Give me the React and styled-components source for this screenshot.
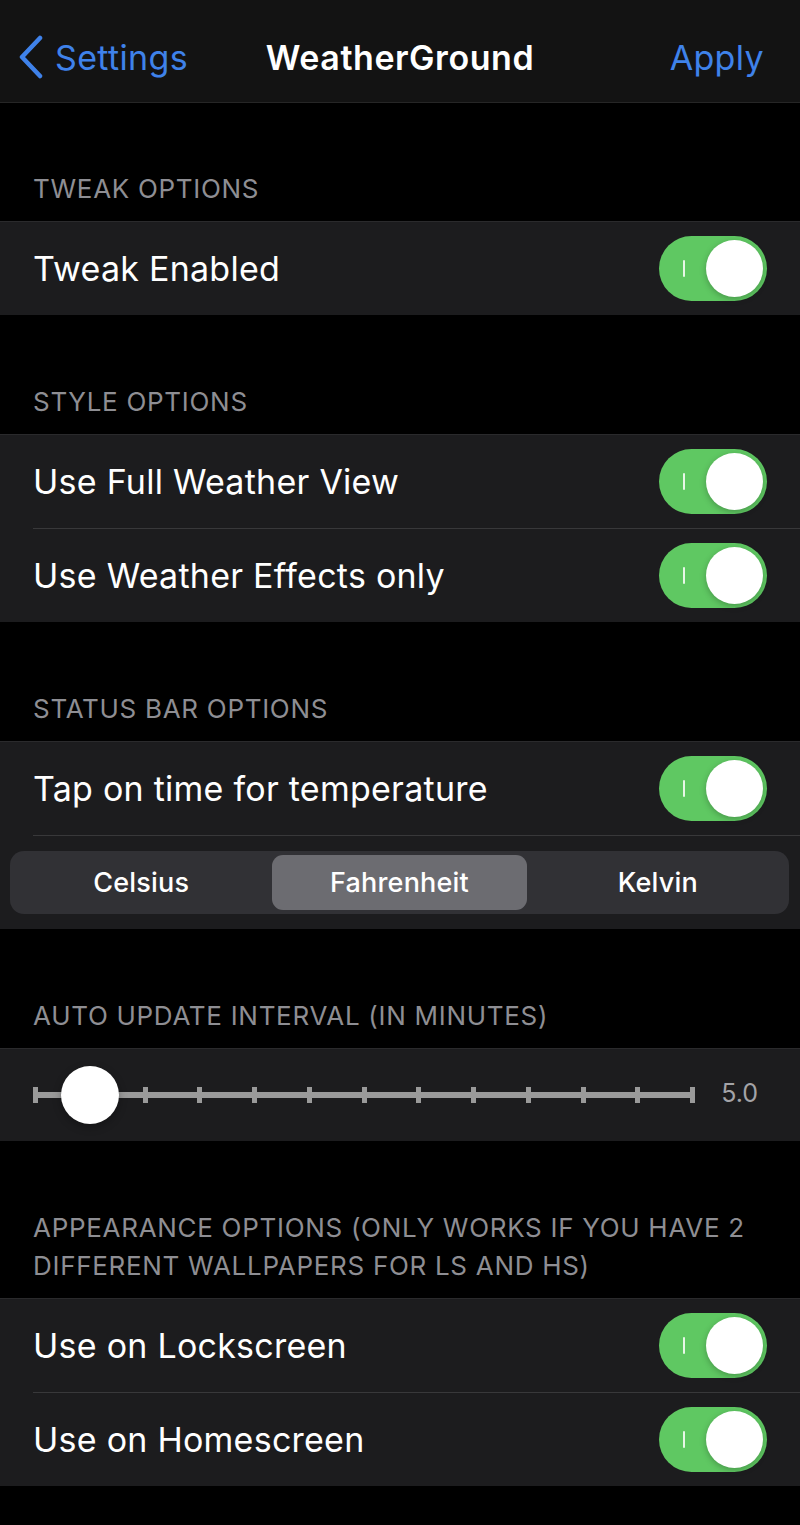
import React from "react";
import styled, { createGlobalStyle } from "styled-components";

const GlobalStyle = createGlobalStyle`
  html, body {
    margin: 0;
    padding: 0;
    background: #000;
  }
  body {
    font-family: Inter, "Noto Sans", "Liberation Sans", sans-serif;
    color: #fff;
    -webkit-font-smoothing: antialiased;
  }
`;

const Page = styled.div`
  width: 800px;
  min-height: 1525px;
  background: #000;
`;

const NavBar = styled.div`
  height: 103px;
  background: #131313;
  border-bottom: 1px solid #262626;
  box-sizing: border-box;
  display: grid;
  grid-template-columns: 1fr auto 1fr;
  align-items: center;
  padding: 12px 36px 0 36px;
`;

const BackButton = styled.div`
  display: flex;
  align-items: center;
  gap: 10px;
  margin-left: -19px;
  color: #3f82ea;
  font-size: 34px;
  letter-spacing: 0.35px;
  justify-self: start;
`;

const Title = styled.div`
  font-size: 34px;
  font-weight: 600;
  letter-spacing: 0.55px;
`;

const NavAction = styled.div`
  justify-self: end;
  color: #3f82ea;
  font-size: 34px;
  letter-spacing: 0.35px;
`;

const Section = styled.section`
  &:first-of-type > div:first-child {
    margin-top: 67px;
  }
`;

const Header = styled.div`
  margin-top: 68px;
  padding: 0 33px 13px;
  color: #8e8e93;
  font-size: 26px;
  line-height: 38px;
  letter-spacing: 0.7px;
  text-transform: uppercase;
`;

const Group = styled.div`
  background: #1c1c1e;
  box-shadow: inset 0 1px 0 #2a2a2c;
`;

const Row = styled.div`
  height: 94px;
  box-sizing: border-box;
  margin-left: 33px;
  padding-right: 33px;
  display: flex;
  align-items: center;
  justify-content: space-between;
  border-top: ${(p) => (p.first ? "none" : "1px solid #38383a")};
`;

const Label = styled.div`
  font-size: 34px;
  letter-spacing: 0.25px;
`;

const SwitchTrack = styled.div`
  position: relative;
  width: 108px;
  height: 65px;
  border-radius: 33px;
  background: ${(p) => (p.on ? "#5fc862" : "#39393d")};
  flex-shrink: 0;
`;

const SwitchMark = styled.span`
  position: absolute;
  left: 24px;
  top: 24px;
  width: 2px;
  height: 17px;
  border-radius: 1px;
  background: rgba(255, 255, 255, 0.85);
`;

const SwitchKnob = styled.span`
  position: absolute;
  top: 4px;
  right: 4px;
  width: 57px;
  height: 57px;
  border-radius: 50%;
  background: #fff;
  box-shadow: 0 2px 6px rgba(0, 0, 0, 0.25);
`;

function Switch({ on = true }) {
  return (
    <SwitchTrack on={on}>
      <SwitchMark />
      <SwitchKnob />
    </SwitchTrack>
  );
}

const SegmentRow = styled.div`
  border-top: 1px solid #38383a;
  box-sizing: border-box;
  margin-left: 33px;
  height: 94px;
  display: flex;
  align-items: center;
`;

const Segmented = styled.div`
  margin-left: -23px;
  width: 779px;
  height: 63px;
  border-radius: 14px;
  background: #313135;
  padding: 4px;
  box-sizing: border-box;
  display: grid;
  grid-template-columns: 1fr 1fr 1fr;
  gap: 4px;
`;

const Segment = styled.div`
  display: flex;
  align-items: center;
  justify-content: center;
  border-radius: 11px;
  font-size: 27px;
  font-weight: 500;
  letter-spacing: 0.2px;
  background: ${(p) => (p.active ? "#6c6c71" : "transparent")};
  color: #fff;
`;

const SliderRow = styled.div`
  height: 93px;
  padding: 0 42px 0 33px;
  display: flex;
  align-items: center;
  gap: 26px;
`;

const SliderTrack = styled.div`
  position: relative;
  flex: 1;
  height: 16px;
  display: flex;
  justify-content: space-between;
  align-items: center;
`;

const TrackLine = styled.div`
  position: absolute;
  left: 0;
  right: 0;
  top: 5px;
  height: 6px;
  background: #9a9a9a;
`;

const Tick = styled.span`
  position: relative;
  width: 5px;
  height: 16px;
  background: #9a9a9a;
`;

const Thumb = styled.span`
  position: absolute;
  top: -21px;
  width: 58px;
  height: 58px;
  margin-left: -27px;
  border-radius: 50%;
  background: #fff;
  box-shadow: 0 3px 8px rgba(0, 0, 0, 0.3);
`;

const SliderValue = styled.div`
  color: #a3a3a7;
  font-size: 25px;
  margin-top: -3px;
`;

function Slider({ value, min, max, steps }) {
  const pct = ((value - min) / (max - min)) * 100;
  return (
    <SliderRow>
      <SliderTrack>
        <TrackLine />
        {Array.from({ length: steps + 1 }).map((_, i) => (
          <Tick key={i} />
        ))}
        <Thumb style={{ left: `${pct}%` }} />
      </SliderTrack>
      <SliderValue>{value.toFixed(1)}</SliderValue>
    </SliderRow>
  );
}

function Chevron() {
  return (
    <svg width="28" height="44" viewBox="0 0 28 44" fill="none">
      <path
        d="M23 3 L5 22 L23 41"
        stroke="#3f82ea"
        strokeWidth="4.5"
        strokeLinecap="round"
        strokeLinejoin="round"
      />
    </svg>
  );
}

function ToggleGroup({ items }) {
  return (
    <Group>
      {items.map((label, i) => (
        <Row key={label} first={i === 0}>
          <Label>{label}</Label>
          <Switch on />
        </Row>
      ))}
    </Group>
  );
}

export default function App() {
  return (
    <Page>
      <GlobalStyle />
      <NavBar>
        <BackButton>
          <Chevron />
          Settings
        </BackButton>
        <Title>WeatherGround</Title>
        <NavAction>Apply</NavAction>
      </NavBar>

      <Section>
        <Header>Tweak Options</Header>
        <ToggleGroup items={["Tweak Enabled"]} />
      </Section>

      <Section>
        <Header>Style Options</Header>
        <ToggleGroup items={["Use Full Weather View", "Use Weather Effects only"]} />
      </Section>

      <Section>
        <Header>Status Bar Options</Header>
        <Group>
          <Row first>
            <Label>Tap on time for temperature</Label>
            <Switch on />
          </Row>
          <SegmentRow>
            <Segmented>
              <Segment>Celsius</Segment>
              <Segment active>Fahrenheit</Segment>
              <Segment>Kelvin</Segment>
            </Segmented>
          </SegmentRow>
        </Group>
      </Section>

      <Section>
        <Header>Auto Update Interval (in minutes)</Header>
        <Group>
          <Slider value={5} min={0} max={60} steps={12} />
        </Group>
      </Section>

      <Section>
        <Header>
          Appearance Options (only works if you have 2 different wallpapers for LS and HS)
        </Header>
        <ToggleGroup items={["Use on Lockscreen", "Use on Homescreen"]} />
      </Section>
    </Page>
  );
}
